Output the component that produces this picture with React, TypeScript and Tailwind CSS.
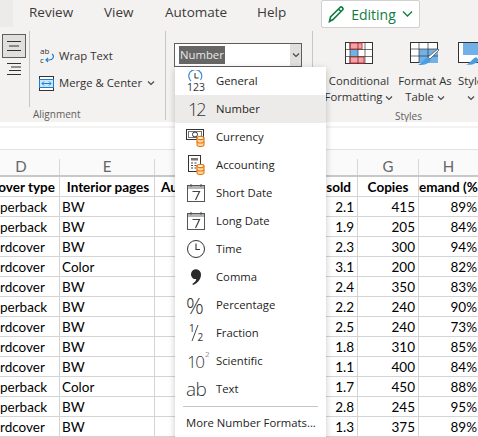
import React from "react";

const uiFont = "font-['Open_Sans',sans-serif]";

const Chevron = ({ className = "" }: { className?: string }) => (
  <svg width="8" height="6" viewBox="0 0 8 6" className={className}>
    <path d="M1 1.5 L4 4.5 L7 1.5" fill="none" stroke="#444" strokeWidth="1.1" />
  </svg>
);

const Coins = ({ x, y }: { x: number; y: number }) => (
  <g transform={`translate(${x} ${y})`} fill="none" stroke="#e8760c" strokeWidth="1.1">
    <path d="M0.5 2 V9 C0.5 11 7.5 11 7.5 9 V2" fill="#fbd9a9" />
    <ellipse cx="4" cy="2" rx="3.5" ry="1.6" fill="#fff" />
    <path d="M0.5 5.5 C0.5 7.5 7.5 7.5 7.5 5.5" />
  </g>
);

const CalendarIcon = () => (
  <svg width="20" height="20" viewBox="0 0 20 20">
    <rect x="1.5" y="2.5" width="17" height="16" fill="#fff" stroke="#555" />
    <rect x="2" y="3" width="16" height="3" fill="#b4b4b4" />
    <path d="M5 1 V4 M15 1 V4" stroke="#555" />
    <path d="M6.5 8.5 H13.5 L9.5 17" fill="none" stroke="#444" strokeWidth="1.2" />
  </svg>
);

const ClockIcon = () => (
  <svg width="20" height="20" viewBox="0 0 20 20">
    <circle cx="10" cy="10" r="8.5" fill="none" stroke="#333" strokeWidth="1" />
    <path d="M10 4.5 V10.5 H14" fill="none" stroke="#333" strokeWidth="1.1" />
  </svg>
);

const formats: { label: string; icon: React.ReactNode; active?: boolean }[] = [
  {
    label: "General",
    icon: (
      <svg width="20" height="22" viewBox="0 0 20 22">
        <path d="M5 11 A6.5 6.5 0 1 1 14.5 10" fill="none" stroke="#2b88d8" strokeWidth="1.1" />
        <path d="M9 3 V8 H12.5" fill="none" stroke="#333" strokeWidth="1" />
        <text x="10" y="20.5" textAnchor="middle" fontSize="10.5" fill="#333" fontFamily="Open Sans">123</text>
      </svg>
    ),
  },
  { label: "Number", active: true, icon: <span className="pl-[2px] text-[18px] tracking-[-2px] leading-none text-[#333] font-light">12</span> },
  {
    label: "Currency",
    icon: (
      <svg width="20" height="20" viewBox="0 0 20 20">
        <rect x="0.5" y="2.5" width="17" height="10" fill="#fff" stroke="#333" />
        <rect x="2.5" y="4.5" width="13" height="6" fill="none" stroke="#777" />
        <circle cx="9" cy="7.5" r="2.5" fill="none" stroke="#333" />
        <Coins x={10.5} y={9} />
      </svg>
    ),
  },
  {
    label: "Accounting",
    icon: (
      <svg width="20" height="20" viewBox="0 0 20 20">
        <rect x="2.5" y="0.5" width="12" height="16" fill="#fff" stroke="#333" />
        <rect x="5" y="3" width="7" height="2.5" fill="#777" />
        <path d="M5 8 H7 M8.5 8 H10.5 M5 10.5 H7 M8.5 10.5 H10.5 M5 13 H7 M8.5 13 H10.5" stroke="#444" strokeWidth="1.2" />
        <Coins x={10.5} y={9} />
      </svg>
    ),
  },
  { label: "Short Date", icon: <CalendarIcon /> },
  { label: "Long Date", icon: <CalendarIcon /> },
  { label: "Time", icon: <ClockIcon /> },
  {
    label: "Comma",
    icon: (
      <svg width="20" height="20" viewBox="0 0 20 20">
        <path
          transform="translate(0 2)"
          d="M5 5 A5 5 0 0 1 15 5.5 C15 10 12 14 7 16 L6.3 15 C8.5 13.5 10 12 10.3 10 C7 10.5 5 8 5 5 Z"
          fill="#2b2b2b"
        />
      </svg>
    ),
  },
  { label: "Percentage", icon: <span className="text-[22px] leading-none text-[#333] font-light">%</span> },
  {
    label: "Fraction",
    icon: (
      <svg width="20" height="20" viewBox="0 0 20 20">
        <text x="3" y="9" fontSize="10" fill="#333" fontFamily="Open Sans">1</text>
        <path d="M12 2 L6 18" stroke="#333" strokeWidth="0.9" />
        <text x="11.5" y="18" fontSize="10" fill="#333" fontFamily="Open Sans">2</text>
      </svg>
    ),
  },
  {
    label: "Scientific",
    icon: (
      <span className="pl-[1px] text-[17px] tracking-[-1.5px] leading-none text-[#333] font-light whitespace-nowrap">
        10<sup className="text-[8px] ml-[1.5px] align-super">2</sup>
      </span>
    ),
  },
  { label: "Text", icon: <span className="text-[19px] tracking-[-0.5px] leading-none text-[#333] font-light">ab</span> },
];

const rows = [
  ["perback", "BW", "2.1", "415", "89%"],
  ["perback", "BW", "1.9", "205", "84%"],
  ["rdcover", "BW", "2.3", "300", "94%"],
  ["rdcover", "Color", "3.1", "200", "82%"],
  ["rdcover", "BW", "2.4", "350", "83%"],
  ["perback", "BW", "2.2", "240", "90%"],
  ["rdcover", "BW", "2.5", "240", "73%"],
  ["rdcover", "BW", "1.8", "310", "85%"],
  ["rdcover", "BW", "1.1", "400", "84%"],
  ["perback", "Color", "1.7", "450", "88%"],
  ["perback", "BW", "2.8", "245", "95%"],
  ["rdcover", "BW", "1.3", "375", "89%"],
];

const cols = "grid grid-cols-[60px_95px_203px_61px_60px]";

const FormatMenu = () => (
  <div className={`absolute left-[175px] top-[67px] w-[151px] h-[375px] bg-white shadow-[0_2px_7px_rgba(0,0,0,0.22)] ${uiFont}`}>
    {formats.map((f) => (
      <div key={f.label} className={`flex items-center h-[28px] ${f.active ? "bg-[#edebe9]" : ""}`}>
        <div className="w-[41px] pl-[11px] flex items-center shrink-0">{f.icon}</div>
        <span className="text-[11.3px] text-[#252423]">{f.label}</span>
      </div>
    ))}
    <div className="mx-[8px] mt-[3px] border-t border-[#c8c6c4]" />
    <div className="pl-[11px] pt-[8px] text-[11.3px] text-[#252423] whitespace-nowrap">More Number Formats...</div>
  </div>
);

const Ribbon = () => (
  <div className={`h-[122px] bg-[#f3f2f1] text-[#323130] ${uiFont}`}>
    <div className="flex h-[31px] text-[13.5px] text-[#3b3a39]">
      <div className="w-[13px] h-[27px] bg-[#ecebe9]" />
      <span className="ml-[16px] pt-[2px] w-[75px]">Review</span>
      <span className="pt-[2px] w-[61px]">View</span>
      <span className="pt-[2px] w-[92px]">Automate</span>
      <span className="pt-[2px] w-[64px]">Help</span>
      <div className="flex items-center justify-center gap-[6px] w-[99px] h-[28px] bg-white border border-[#d2d0ce] rounded-[2px] text-[#107c41]">
        <svg width="17" height="18" viewBox="0 0 17 18" fill="none" stroke="#107c41" strokeWidth="1.6">
          <path d="M1.5 16.5 L2.5 12 L12 2.5 C13.5 1 16 3.5 14.5 5 L5 14.5 Z M10.5 4 L13 6.5" />
        </svg>
        <span className="text-[14px]">Editing</span>
        <svg width="11" height="8" viewBox="0 0 11 8"><path d="M1 1.5 L5.5 6 L10 1.5" fill="none" stroke="#107c41" strokeWidth="1.3" /></svg>
      </div>
    </div>
    <div className="flex h-[91px] text-[11.3px]">
      {/* align buttons */}
      <div className="w-[30px] pl-[2px] pt-[3px] shrink-0 border-r border-[#c8c6c4] h-[76px]">
        <div className="w-[24px] h-[24px] border border-[#605e5c] bg-[#e1dfdd] flex items-center justify-center">
          <svg width="14" height="12" viewBox="0 0 14 12"><path d="M0 1.5 H14 M2 6 H12 M0 10.5 H14" stroke="#333" /></svg>
        </div>
        <div className="w-[24px] h-[22px] flex items-center justify-center">
          <svg width="14" height="14" viewBox="0 0 14 14"><path d="M0 1.5 H14 M4 5 H14 M2 8.5 H14 M0 12.5 H14" stroke="#333" /></svg>
        </div>
      </div>
      {/* wrap + merge */}
      <div className="w-[136px] h-[89px] shrink-0 border-r border-[#c8c6c4] flex flex-col pl-[9px]">
        <div className="flex items-center gap-[4px] mt-[16px] h-[20px]">
          <svg width="16" height="18" viewBox="0 0 16 18">
            <text x="1" y="7" fontSize="8" fill="#333" fontFamily="Open Sans">ab</text>
            <text x="1" y="16" fontSize="8" fill="#333" fontFamily="Open Sans">c</text>
            <path d="M13 7 C16 9 14 13 10 13 H7 M9 11 L7 13 L9 15" fill="none" stroke="#1b7fd1" strokeWidth="1.1" />
          </svg>
          <span>Wrap Text</span>
        </div>
        <div className="flex items-center gap-[4px] mt-[10px] h-[20px]">
          <svg width="15" height="15" viewBox="0 0 15 15" className="mr-[1px]">
            <rect x="0.5" y="0.5" width="14" height="14" fill="#fff" stroke="#333" />
            <rect x="0.5" y="3.5" width="14" height="8" fill="#cde6f7" stroke="#1b7fd1" />
            <path d="M3 7.5 H12 M5 5.5 L3 7.5 L5 9.5 M10 5.5 L12 7.5 L10 9.5" fill="none" stroke="#1b7fd1" />
          </svg>
          <span>Merge & Center</span>
          <Chevron className="ml-[1px]" />
        </div>
        <div className="mt-[15px] -ml-[6px] text-[10px] text-[#605e5c]">Alignment</div>
      </div>
      {/* number box */}
      <div className="w-[147px] h-[89px] shrink-0 border-r border-[#c8c6c4] pl-[8px] pt-[12px]">
        <div className="w-[128px] h-[24px] bg-white border border-[#605e5c] flex items-center justify-between pl-[4px]">
          <span className="bg-[#666] text-[#e8e8e8] text-[11.3px] leading-[18px] px-[1px]">Number</span>
          <div className="w-[11px] h-[22px] bg-[#e1dfdd] flex items-center justify-center"><Chevron /></div>
        </div>
      </div>
      {/* styles */}
      <div className="flex-1 min-w-0 overflow-hidden relative">
        <div className="flex w-[200px] pt-[11px]">
          <div className="w-[92px] flex flex-col items-center">
            <svg width="29" height="22" viewBox="0 0 29 22">
              <rect x="0.5" y="0.5" width="27" height="21" fill="#fff" stroke="#333" />
              <rect x="5" y="1" width="12" height="6" fill="#f8a0a6" stroke="#d13438" />
              <rect x="5" y="8" width="8" height="6" fill="#71b1e8" />
              <rect x="5" y="15" width="14" height="6" fill="#f8a0a6" stroke="#d13438" />
              <path d="M5 0 V22 M13 0 V22 M20 0 V22 M0 7.5 H28 M0 14.5 H28" stroke="#333" strokeWidth="0.7" />
            </svg>
            <div className="mt-[9px] text-center leading-[16px] whitespace-nowrap">
              <div>Conditional</div>
              <div>Formatting <Chevron className="inline" /></div>
            </div>
          </div>
          <div className="w-[50px] -ml-[5px] flex flex-col items-center">
            <svg width="31" height="24" viewBox="0 0 31 24">
              <rect x="0.5" y="0.5" width="27" height="20" fill="#fff" stroke="#333" />
              <rect x="9" y="7" width="19" height="14" fill="#71b1e8" />
              <path d="M9 0 V21 M18 0 V21 M0 7 H28 M0 14 H28" stroke="#333" strokeWidth="0.7" />
              <path d="M29 8 L20 17 L18 15 L28 7 Z" fill="#fff" stroke="#555" strokeWidth="0.8" />
              <path d="M18 15 L21 18 C18 23 12 23 8 23 C12 21 14 17 18 15 Z" fill="#4a9ee0" />
            </svg>
            <div className="mt-[7px] text-center leading-[16px] whitespace-nowrap">
              <div>Format As</div>
              <div>Table <Chevron className="inline" /></div>
            </div>
          </div>
          <div className="pl-[8px] flex flex-col">
            <svg width="31" height="24" viewBox="0 0 31 24">
              <rect x="0.5" y="0.5" width="27" height="20" fill="#fff" stroke="#333" />
              <rect x="5" y="1" width="23" height="12" fill="#71b1e8" />
              <path d="M18 15 L21 18 C18 23 12 23 8 23 C12 21 14 17 18 15 Z" fill="#4a9ee0" />
            </svg>
            <div className="mt-[7px] leading-[16px] whitespace-nowrap">
              <div>Styles</div>
              <div className="pl-[9px]"><Chevron className="inline" /></div>
            </div>
          </div>
        </div>
        <div className="absolute left-[82px] top-[78px] text-[10px] text-[#605e5c]">Styles</div>
      </div>
    </div>
  </div>
);

const Sheet = () => (
  <div className="font-['Lato',sans-serif] text-[13.5px] text-black">
    <div className="h-[6px] bg-white border-b-2 border-[#f3f3f3]" />
    <div className="h-[22px] bg-white border-b border-[#e1e1e1]" />
    <div className={`${cols} h-[27px] bg-[#fafafa] border-b-2 border-[#c8c8c8] text-[#666] text-[15px]`}>
      {["D", "E", "", "G", "H"].map((c, i) => (
        <div key={i} className={`mt-[9px] text-center leading-[15px] border-r border-[#d8d8d8] ${i === 0 ? "pr-[17px]" : ""}`}>{c}</div>
      ))}
    </div>
    <div className={`${cols} h-[20px] border-b border-[#d4d4d4] font-bold leading-[20px] whitespace-nowrap`}>
      <div className="border-r border-[#d4d4d4] overflow-hidden flex justify-end pr-[4px]">over type</div>
      <div className="border-r border-[#d4d4d4] text-center pl-[2px]">Interior pages</div>
      <div className="border-r border-[#d4d4d4] flex justify-between px-[6px]"><span>Au</span><span>sold</span></div>
      <div className="border-r border-[#d4d4d4] text-center">Copies</div>
      <div className="overflow-hidden">emand (%</div>
    </div>
    {rows.map((r, i) => (
      <div key={i} className={`${cols} h-[20px] border-b border-[#d4d4d4] leading-[20px] whitespace-nowrap`}>
        <div className="border-r border-[#d4d4d4]">{r[0]}</div>
        <div className="border-r border-[#d4d4d4] pl-[2px]">{r[1]}</div>
        <div className="border-r border-[#d4d4d4] text-right pr-[3px]">{r[2]}</div>
        <div className="border-r border-[#d4d4d4] text-right pr-[3px]">{r[3]}</div>
        <div className="text-right pr-[2px]">{r[4]}</div>
      </div>
    ))}
  </div>
);

export default function App() {
  return (
    <div className="relative w-[478px] h-[437px] overflow-hidden bg-white">
      <Ribbon />
      <Sheet />
      <FormatMenu />
    </div>
  );
}
